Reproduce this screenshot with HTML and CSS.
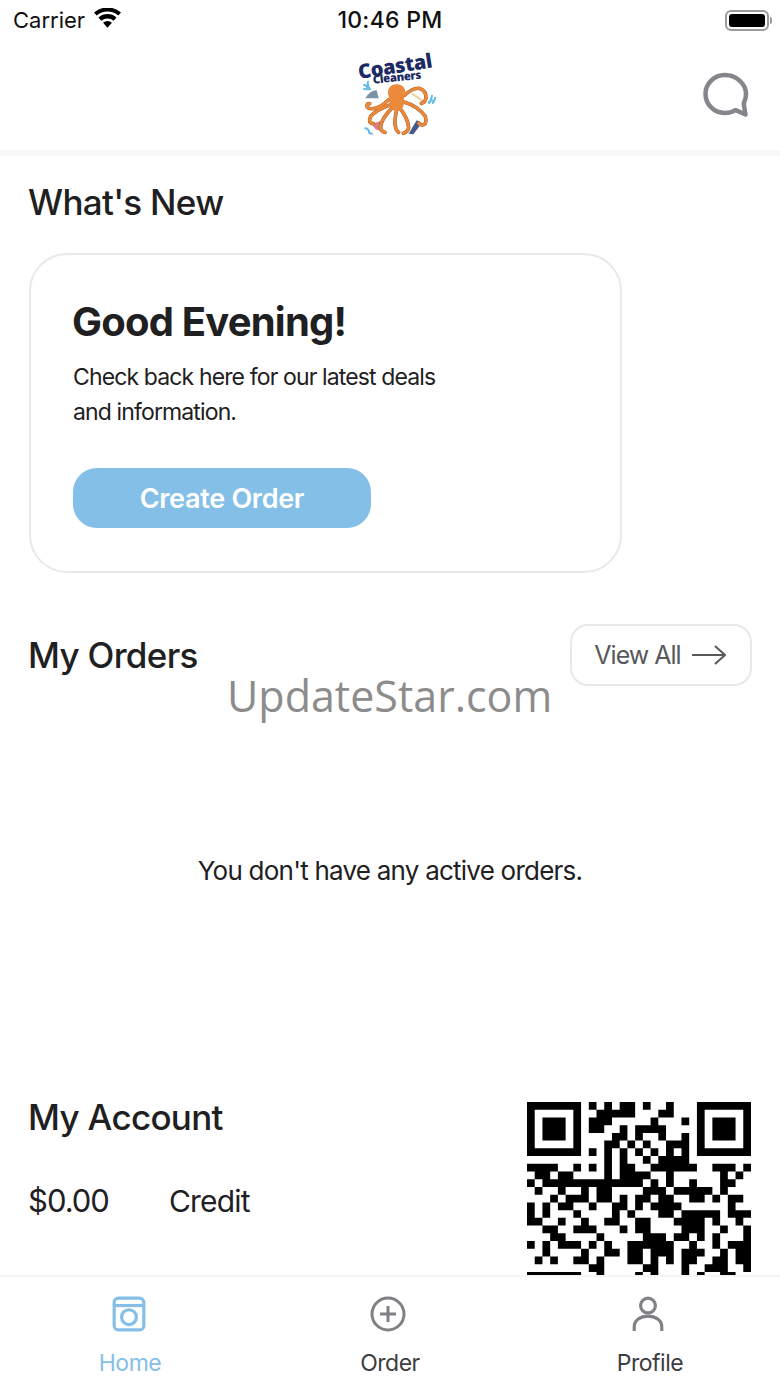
FILE: index.html
```html
<!DOCTYPE html>
<html lang="en">
<head>
    <meta charset="UTF-8">
    <meta name="viewport" content="width=device-width, initial-scale=1.0">
    <title>Coastal Cleaners</title>
    <link rel="stylesheet" href="styles.css">
</head>
<body>
<div class="app">

    <div class="status-bar">
        <div class="status-left">
            <span>Carrier</span>
            <svg class="wifi" viewBox="0 0 28 20"><path d="M14 20l-4.600-5.200a7 7 0 0 1 9.200 0zM7.600 12.800l-3-3.300a14.200 14.200 0 0 1 18.800 0l-3 3.300a9.800 9.800 0 0 0-12.800 0zM2.800 7.500L0 4.400a21 21 0 0 1 28 0l-2.800 3.100a16.800 16.800 0 0 0-22.400 0z"/></svg>
        </div>
        <div class="status-time">10:46 PM</div>
        <div class="status-right">
            <div class="battery"><div class="battery-level"></div></div>
            <div class="battery-cap"></div>
        </div>
    </div>

    <header class="top-bar">
        <svg class="logo" viewBox="0 0 330 300">
            <text class="logo-big" transform="translate(58 102) rotate(-9)">Coastal</text>
            <text class="logo-small" transform="translate(100 116) rotate(-6)">Cleaners</text>
            <g class="splash">
                <path d="M72 120q8 0 10 8M84 110q-3 10 6 22M72 132q10 2 18 0"/>
                <path d="M266 172q6-8 12-6M276 152q-2 12-8 22M286 158q-2 10-8 16"/>
                <path d="M76 250q10 0 12 14l8 2"/>
            </g>
            <path class="iron" d="M76 160q14-24 34-24l6 24z"/>
            <path class="brush" d="M216 146l42 28" />
            <path class="shirt" d="M98 240q14-16 32-8l-4 22q-18 8-28-14z"/>
            <path class="bottle" d="M206 266l24-40 16 8-26 34z"/>
            <g class="arms-outline">
                <path d="M145 165q-20 20-40 25-20 4-24-6-2-8 8-8"/>
                <path d="M150 180q-40 14-58 34-10 20 8 22"/>
                <path d="M155 190q-30 30-34 56 2 14 14 16"/>
                <path d="M170 195q-8 36-4 48 2 14 10 19"/>
                <path d="M180 190q24 30 26 58-2 12-16 17"/>
                <path d="M190 170q46 14 66 44 6 24-8 26-10 0-12-6"/>
                <path d="M195 150q24-22 42-20 22 6 21 30-4 14-14 15"/>
            </g>
            <g class="arms">
                <path d="M145 165q-20 20-40 25-20 4-24-6-2-8 8-8"/>
                <path d="M150 180q-40 14-58 34-10 20 8 22"/>
                <path d="M155 190q-30 30-34 56 2 14 14 16"/>
                <path d="M170 195q-8 36-4 48 2 14 10 19"/>
                <path d="M180 190q24 30 26 58-2 12-16 17"/>
                <path d="M190 170q46 14 66 44 6 24-8 26-10 0-12-6"/>
                <path d="M195 150q24-22 42-20 22 6 21 30-4 14-14 15"/>
            </g>
            <path class="head" d="M170 118c16 0 26 10 26 24 0 12-6 18-4 28 1 10-4 26-22 28-18-2-23-18-22-28 2-10-4-16-4-28 0-14 10-24 26-24z"/>
        </svg>
        <svg class="chat-icon" viewBox="0 0 46 46">
            <path d="M22 3C11 3 2.500 11.500 2.500 22S11 41 22 41c4 0 7.500-1 10.500-3l10 4.500-1.800-11c1.500-3 2.300-6 2.300-9.500C43 11.500 33 3 22 3z"/>
        </svg>
    </header>

    <main class="content">
        <h2 class="section-title news-title">What's New</h2>

        <div class="news-card">
            <h1 class="greeting">Good Evening!</h1>
            <p class="news-text">Check back here for our latest deals<br>and information.</p>
            <button class="create-btn">Create Order</button>
        </div>

        <div class="orders-head">
            <h2 class="section-title">My Orders</h2>
            <button class="view-all">
                View All
                <svg class="arrow-icon" viewBox="0 0 34 20"><path d="M0 10h33M23 1l10 9-10 9"/></svg>
            </button>
        </div>

        <div class="no-orders">You don't have any active orders.</div>

        <div class="account">
            <div class="account-info">
                <h2 class="section-title">My Account</h2>
                <div class="credit">
                    <span class="credit-value">$0.00</span>
                    <span class="credit-label">Credit</span>
                </div>
            </div>
            <svg class="qr" viewBox="0 0 29 29">
                <path d="M0 .5h7M8 .5h1M10 .5h1M12 .5h2M15 .5h1M18 .5h1M22 .5h7
                    M0 1.500h1M6 1.500h1M9 1.500h5M17 1.500h2M22 1.500h1M28 1.500h1
                    M0 2.500h1M2 2.500h3M6 2.500h1M8 2.500h3M16 2.500h1M20 2.500h1M22 2.500h1M24 2.500h3M28 2.500h1
                    M0 3.500h1M2 3.500h3M6 3.500h1M8 3.500h2M12 3.500h1M14 3.500h4M22 3.500h1M24 3.500h3M28 3.500h1
                    M0 4.500h1M2 4.500h3M6 4.500h1M11 4.500h2M14 4.500h1M17 4.500h1M20 4.500h1M22 4.500h1M24 4.500h3M28 4.500h1
                    M0 5.500h1M6 5.500h1M10 5.500h2M13 5.500h1M15 5.500h1M18 5.500h3M22 5.500h1M28 5.500h1
                    M0 6.500h7M8 6.500h1M10 6.500h1M12 6.500h1M14 6.500h1M16 6.500h1M18 6.500h1M20 6.500h1M22 6.500h7
                    M10 7.500h1M12 7.500h1M15 7.500h1M17 7.500h4
                    M0 8.500h4M6 8.500h1M8 8.500h1M10 8.500h1M12 8.500h2M16 8.500h6M24 8.500h3M28 8.500h1
                    M1 9.500h2M4 9.500h2M10 9.500h1M12 9.500h4M18 9.500h1M25 9.500h1M27 9.500h1
                    M0 10.500h1M2 10.500h13M16 10.500h1M18 10.500h1M21 10.500h1M25 10.500h2
                    M1 11.500h1M4 11.500h1M7 11.500h1M9 11.500h2M15 11.500h3M19 11.500h5M25 11.500h1
                    M3 12.500h1M5 12.500h3M9 12.500h2M12 12.500h1M14 12.500h2M17 12.500h2M21 12.500h2M24 12.500h1M26 12.500h2
                    M0 13.500h1M2 13.500h1M4 13.500h2M8 13.500h1M11 13.500h2M14 13.500h1M16 13.500h4M26 13.500h1
                    M0 14.500h1M2 14.500h1M6 14.500h1M11 14.500h1M13 14.500h1M17 14.500h2M20 14.500h5M26 14.500h3
                    M0 15.500h2M4 15.500h1M7 15.500h1M10 15.500h2M14 15.500h2M19 15.500h4M24 15.500h1M27 15.500h1
                    M2 16.500h2M6 16.500h3M12 16.500h1M14 16.500h2M20 16.500h3M25 16.500h1M28 16.500h1
                    M3 17.500h2M9 17.500h1M15 17.500h3M19 17.500h2M22 17.500h1M24 17.500h1M28 17.500h1
                    M0 18.500h1M2 18.500h1M4 18.500h3M8 18.500h1M10 18.500h1M13 18.500h6M21 18.500h1M24 18.500h1M26 18.500h3
                    M2 19.500h1M7 19.500h1M10 19.500h2M13 19.500h2M16 19.500h3M20 19.500h3M25 19.500h1M27 19.500h2
                    M1 20.500h1M3 20.500h1M6 20.500h2M9 20.500h1M13 20.500h2M16 20.500h1M18 20.500h1M20 20.500h2M24 20.500h2M27 20.500h2
                    M8 21.500h2M15 21.500h2M20 21.500h1M23 21.500h3M28 21.500h1
                    M0 22.500h7M9 22.500h1M14 22.500h1M16 22.500h1M20 22.500h1M22 22.500h1M25 22.500h2"/>
            </svg>
        </div>
    </main>

    <nav class="tab-bar">
        <div class="tab tab-active">
            <svg class="tab-icon home-icon" viewBox="0 0 32 34">
                <rect x="2" y="2" width="28" height="30" rx="4"/>
                <path d="M2 9h28"/>
                <circle cx="16" cy="20" r="7"/>
            </svg>
            <span>Home</span>
        </div>
        <div class="tab">
            <svg class="tab-icon shifted-icon" viewBox="0 0 36 36">
                <circle cx="18" cy="18" r="16"/>
                <path d="M18 10v16M10 18h16"/>
            </svg>
            <span>Order</span>
        </div>
        <div class="tab">
            <svg class="tab-icon shifted-icon" viewBox="0 0 32 34">
                <circle cx="16" cy="9" r="7"/>
                <path d="M3 33v-4c0-6 6-10 13-10s13 4 13 10v4"/>
            </svg>
            <span>Profile</span>
        </div>
    </nav>

    <!-- Watermark over the page -->
    <div class="watermark">UpdateStar.com</div>
</div>
</body>
</html>
```

FILE: styles.css
```css
* {
    box-sizing: border-box;
}

body {
    margin: 0;
    font-family: Inter, "Liberation Sans", sans-serif;
    background-color: #ffffff;
    color: #1f2022;
}

.app {
    position: relative;
    width: 780px;
    height: 1387px;
    display: flex;
    flex-direction: column;
    overflow: hidden;
}

/* Status bar */
.status-bar {
    height: 40px;
    flex: none;
    display: flex;
    align-items: center;
    justify-content: space-between;
    padding: 0 8px 0 13px;
    font-size: 22px;
    color: #111;
}

.status-left {
    width: 200px;
    display: flex;
    align-items: center;
    gap: 9px;
}

.wifi {
    width: 27px;
    height: 20px;
    margin-bottom: 4px;
    fill: #000;
}

.status-time {
    font-size: 23px;
    font-weight: 500;
    letter-spacing: 0.3px;
}

.status-right {
    width: 205px;
    display: flex;
    align-items: center;
    justify-content: flex-end;
    gap: 1px;
}

.battery {
    width: 44px;
    height: 21px;
    padding: 2px;
    border: 2px solid #9b9b9b;
    border-radius: 6px;
}

.battery-level {
    height: 100%;
    background-color: #000;
    border-radius: 3px;
}

.battery-cap {
    width: 2px;
    height: 7px;
    background-color: #9b9b9b;
    border-radius: 0 2px 2px 0;
}

/* Header */
.top-bar {
    height: 116px;
    flex: none;
    display: flex;
    align-items: flex-start;
    justify-content: center;
    position: relative;
    border-bottom: 6px solid #f8f8f8;
}

.logo {
    width: 110px;
    height: 100px;
    margin: 5px 0 0 10px;
}

.logo-big {
    font-family: "Open Sans", sans-serif;
    font-weight: 800;
    font-size: 60px;
    letter-spacing: -1px;
    fill: #1c2a63;
}

.logo-small {
    font-family: "Open Sans", sans-serif;
    font-weight: 800;
    font-size: 34px;
    letter-spacing: -1px;
    fill: #1c2a63;
}

.splash {
    fill: none;
    stroke: #62bde0;
    stroke-width: 6;
    stroke-linecap: round;
}

.iron { fill: #7f93a8; }
.shirt { fill: #d9808a; }
.bottle { fill: #44598c; }

.brush {
    stroke: #e9d39a;
    stroke-width: 6;
}

.arms-outline {
    fill: none;
    stroke: #a9602b;
    stroke-width: 11;
    stroke-linecap: round;
}

.arms {
    fill: none;
    stroke: #ec8a3c;
    stroke-width: 8;
    stroke-linecap: round;
}

.head {
    fill: #ec8a3c;
}

.chat-icon {
    position: absolute;
    right: 31px;
    top: 32px;
    width: 46px;
    height: 46px;
    fill: none;
    stroke: #85858b;
    stroke-width: 4.500;
    stroke-linejoin: round;
}

/* Main content */
.content {
    flex: 1;
    min-height: 0;
    overflow: hidden;
    padding: 0 29px;
}

.section-title {
    margin: 0 0 0 -1px;
    font-size: 35px;
    font-weight: 500;
    line-height: 42px;
    letter-spacing: -0.7px;
}

.news-title {
    margin-top: 25px;
}

.news-card {
    width: 593px;
    height: 320px;
    margin-top: 30px;
    padding: 43px 42px 0;
    border: 2px solid #e9e9e9;
    border-radius: 38px;
}

.greeting {
    margin: 0 0 0 -1px;
    font-size: 40px;
    line-height: 48px;
    font-weight: 700;
    letter-spacing: -0.8px;
}

.news-text {
    margin: 14px 0 0;
    font-size: 23px;
    line-height: 34.500px;
    letter-spacing: -0.87px;
}

.create-btn {
    display: block;
    width: 298px;
    height: 60px;
    margin-top: 39px;
    border: none;
    border-radius: 24px;
    background-color: #84bfe8;
    color: #fff;
    font-family: inherit;
    font-size: 27px;
    font-weight: 600;
    letter-spacing: -0.3px;
}

.orders-head {
    display: flex;
    align-items: center;
    justify-content: space-between;
    margin: 51px -1px 0 0;
}

.view-all {
    width: 182px;
    height: 62px;
    display: flex;
    align-items: center;
    justify-content: center;
    gap: 11px;
    padding: 0 8px 0 6px;
    background: none;
    border: 2px solid #e8e8e8;
    border-radius: 18px;
    color: #58585c;
    font-family: inherit;
    font-size: 25px;
    letter-spacing: -1px;
}

.arrow-icon {
    width: 34px;
    height: 20px;
    fill: none;
    stroke: #58585c;
    stroke-width: 2;
}

.no-orders {
    height: 395px;
    padding-top: 168px;
    text-align: center;
    font-size: 26px;
    line-height: 34px;
    letter-spacing: -0.77px;
}

.account {
    display: flex;
    justify-content: space-between;
}

.account-info {
    padding-top: 15px;
}

.credit {
    display: flex;
    align-items: center;
    margin-top: 43px;
    font-size: 30px;
    line-height: 40px;
    margin-left: -1px;
}

.credit-value {
    width: 141px;
    font-size: 31px;
    letter-spacing: -1px;
}

.credit-label {
    letter-spacing: -0.8px;
}

.qr {
    width: 224px;
    height: 224px;
    margin-top: 20.500px;
    flex: none;
    fill: none;
    stroke: #000;
    stroke-width: 1;
}

/* Tab bar */
.tab-bar {
    height: 112px;
    flex: none;
    display: flex;
    background-color: #fff;
    border-top: 2px solid #f5f5f5;
}

.tab {
    flex: 1;
    display: flex;
    flex-direction: column;
    align-items: center;
    padding-top: 19px;
    font-size: 23px;
    line-height: 30px;
    letter-spacing: -0.5px;
    color: #3d3d40;
}

.tab span {
    margin-top: 16px;
}

.tab-icon {
    width: 36px;
    height: 36px;
    fill: none;
    stroke: #808085;
    stroke-width: 3;
}

.home-icon {
    width: 34px;
    margin-right: 2px;
}

.shifted-icon {
    margin-right: 4px;
}

.tab-active {
    color: #85bfe8;
}

.tab-active .tab-icon {
    stroke: #85bfe8;
}

.watermark {
    position: absolute;
    left: 227px;
    top: 666px;
    font-family: "Open Sans", sans-serif;
    font-size: 43px;
    line-height: 60px;
    color: #8c8c8c;
}
```
